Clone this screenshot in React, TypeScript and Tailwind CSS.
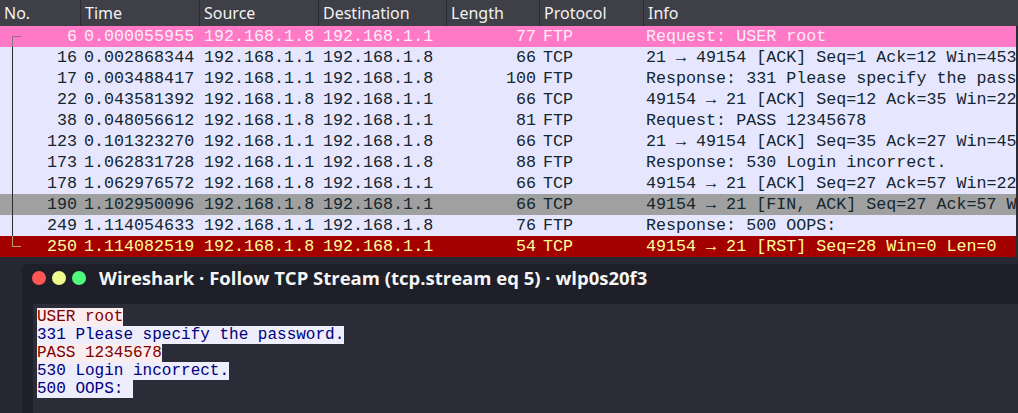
type Packet = {
  no: number;
  time: string;
  src: string;
  dst: string;
  len: number;
  proto: string;
  info: string;
  kind: "selected" | "normal" | "fin" | "rst";
};

const packets: Packet[] = [
  { no: 6, time: "0.000055955", src: "192.168.1.8", dst: "192.168.1.1", len: 77, proto: "FTP", info: "Request: USER root", kind: "selected" },
  { no: 16, time: "0.002868344", src: "192.168.1.1", dst: "192.168.1.8", len: 66, proto: "TCP", info: "21 → 49154 [ACK] Seq=1 Ack=12 Win=45312 Len=0", kind: "normal" },
  { no: 17, time: "0.003488417", src: "192.168.1.1", dst: "192.168.1.8", len: 100, proto: "FTP", info: "Response: 331 Please specify the password.", kind: "normal" },
  { no: 22, time: "0.043581392", src: "192.168.1.8", dst: "192.168.1.1", len: 66, proto: "TCP", info: "49154 → 21 [ACK] Seq=12 Ack=35 Win=22272 Len=0", kind: "normal" },
  { no: 38, time: "0.048056612", src: "192.168.1.8", dst: "192.168.1.1", len: 81, proto: "FTP", info: "Request: PASS 12345678", kind: "normal" },
  { no: 123, time: "0.101323270", src: "192.168.1.1", dst: "192.168.1.8", len: 66, proto: "TCP", info: "21 → 49154 [ACK] Seq=35 Ack=27 Win=45312 Len=0", kind: "normal" },
  { no: 173, time: "1.062831728", src: "192.168.1.1", dst: "192.168.1.8", len: 88, proto: "FTP", info: "Response: 530 Login incorrect.", kind: "normal" },
  { no: 178, time: "1.062976572", src: "192.168.1.8", dst: "192.168.1.1", len: 66, proto: "TCP", info: "49154 → 21 [ACK] Seq=27 Ack=57 Win=22272 Len=0", kind: "normal" },
  { no: 190, time: "1.102950096", src: "192.168.1.8", dst: "192.168.1.1", len: 66, proto: "TCP", info: "49154 → 21 [FIN, ACK] Seq=27 Ack=57 Win=22272 Len=0", kind: "fin" },
  { no: 249, time: "1.114054633", src: "192.168.1.1", dst: "192.168.1.8", len: 76, proto: "FTP", info: "Response: 500 OOPS:", kind: "normal" },
  { no: 250, time: "1.114082519", src: "192.168.1.8", dst: "192.168.1.1", len: 54, proto: "TCP", info: "49154 → 21 [RST] Seq=28 Win=0 Len=0", kind: "rst" },
];

const rowStyle = {
  selected: "bg-[#ff79c6] text-[#fbeef6]",
  normal: "bg-[#e7e6ff] text-[#12272e]",
  fin: "bg-[#a0a0a0] text-[#12272e]",
  rst: "bg-[#a40000] text-[#fffc9c]",
};

const cols = "grid grid-cols-[81px_119px_119px_128px_93px_104px_1fr]";

const stream = [
  { text: "USER root", client: true },
  { text: "331 Please specify the password.", client: false },
  { text: "PASS 12345678", client: true },
  { text: "530 Login incorrect.", client: false },
  { text: "500 OOPS: ", client: false },
];

function TreeLine({ first, last }: { first: boolean; last: boolean }) {
  const color = first ? "bg-[#8a6f80]" : last ? "bg-[#b9a06a]" : "bg-[#2b2b33]";
  return (
    <>
      <span
        className={`absolute left-[12px] w-px ${color} ${
          first ? "top-[11px] bottom-0" : last ? "top-0 h-[11px]" : "top-0 bottom-0"
        }`}
      />
      {(first || last) && (
        <span className={`absolute left-[12px] top-[10px] h-px w-[9px] ${color}`} />
      )}
    </>
  );
}

export default function App() {
  return (
    <div className="w-[1018px] h-[413px] overflow-hidden bg-[#262731] flex flex-col">
      {/* packet list */}
      <div className="flex flex-col">
        <div
          className={`${cols} h-[26px] bg-[#3f3f47] text-[#f2f2f2] text-[16px] leading-[26px]`}
          style={{ fontFamily: '"Noto Sans", "Open Sans", sans-serif' }}
        >
          {["No.", "Time", "Source", "Destination", "Length", "Protocol", "Info"].map((h, i) => (
            <div
              key={h}
              className={`pl-[4px] whitespace-nowrap overflow-hidden ${i < 6 ? "border-r border-[#2b2b31]" : ""}`}
            >
              {h}
            </div>
          ))}
        </div>
        <div
          className="flex flex-col text-[16.7px] leading-[21px] border-r-2 border-[#2b2b33]"
          style={{ fontFamily: '"Liberation Mono", "DejaVu Sans Mono", monospace' }}
        >
          {packets.map((p, i) => (
            <div key={p.no} className={`${cols} h-[21px] whitespace-nowrap ${rowStyle[p.kind]}`}>
              <div className="relative text-right pr-[4px]">
                <TreeLine first={i === 0} last={i === packets.length - 1} />
                {p.no}
              </div>
              <div className="pl-[3px] overflow-hidden">{p.time}</div>
              <div className="pl-[4px] overflow-hidden">{p.src}</div>
              <div className="pl-[4px] overflow-hidden">{p.dst}</div>
              <div className="text-right pr-[4px]">{p.len}</div>
              <div className="pl-[3px]">{p.proto}</div>
              <div className="pl-[2px] overflow-hidden">{p.info}</div>
            </div>
          ))}
        </div>
      </div>

      {/* follow stream window */}
      <div className="flex-1 pt-[7px] pl-[22px] flex">
        <div className="flex-1 bg-[#1e1f28] rounded-tl-[6px] flex flex-col">
          <div className="h-[40px] pb-[12px] flex items-center gap-[6px] pl-[10px]">
            <span className="w-[14px] h-[14px] rounded-full bg-[#ff5555]" />
            <span className="w-[14px] h-[14px] rounded-full bg-[#f1fa8c]" />
            <span className="w-[14px] h-[14px] rounded-full bg-[#50fa7b]" />
            <span
              className="ml-[7px] text-[18.5px] font-bold text-[#f5f5f5] whitespace-nowrap"
              style={{ fontFamily: '"Open Sans", "Noto Sans", sans-serif' }}
            >
              Wireshark · Follow TCP Stream (tcp.stream eq 5) · wlp0s20f3
            </span>
          </div>
          <div
            className="flex-1 ml-[11px] bg-[#2a2c37] pt-[4px] pl-[4px] text-[16px] leading-[18px]"
            style={{ fontFamily: '"Liberation Mono", "DejaVu Sans Mono", monospace' }}
          >
            {stream.map((l) => (
              <div key={l.text}>
                <span
                  className={`inline-block whitespace-pre ${
                    l.client ? "bg-[#fbeded] text-[#7f0000]" : "bg-[#ededfb] text-[#00007f]"
                  }`}
                >
                  {l.text}
                </span>
              </div>
            ))}
          </div>
        </div>
      </div>
    </div>
  );
}
